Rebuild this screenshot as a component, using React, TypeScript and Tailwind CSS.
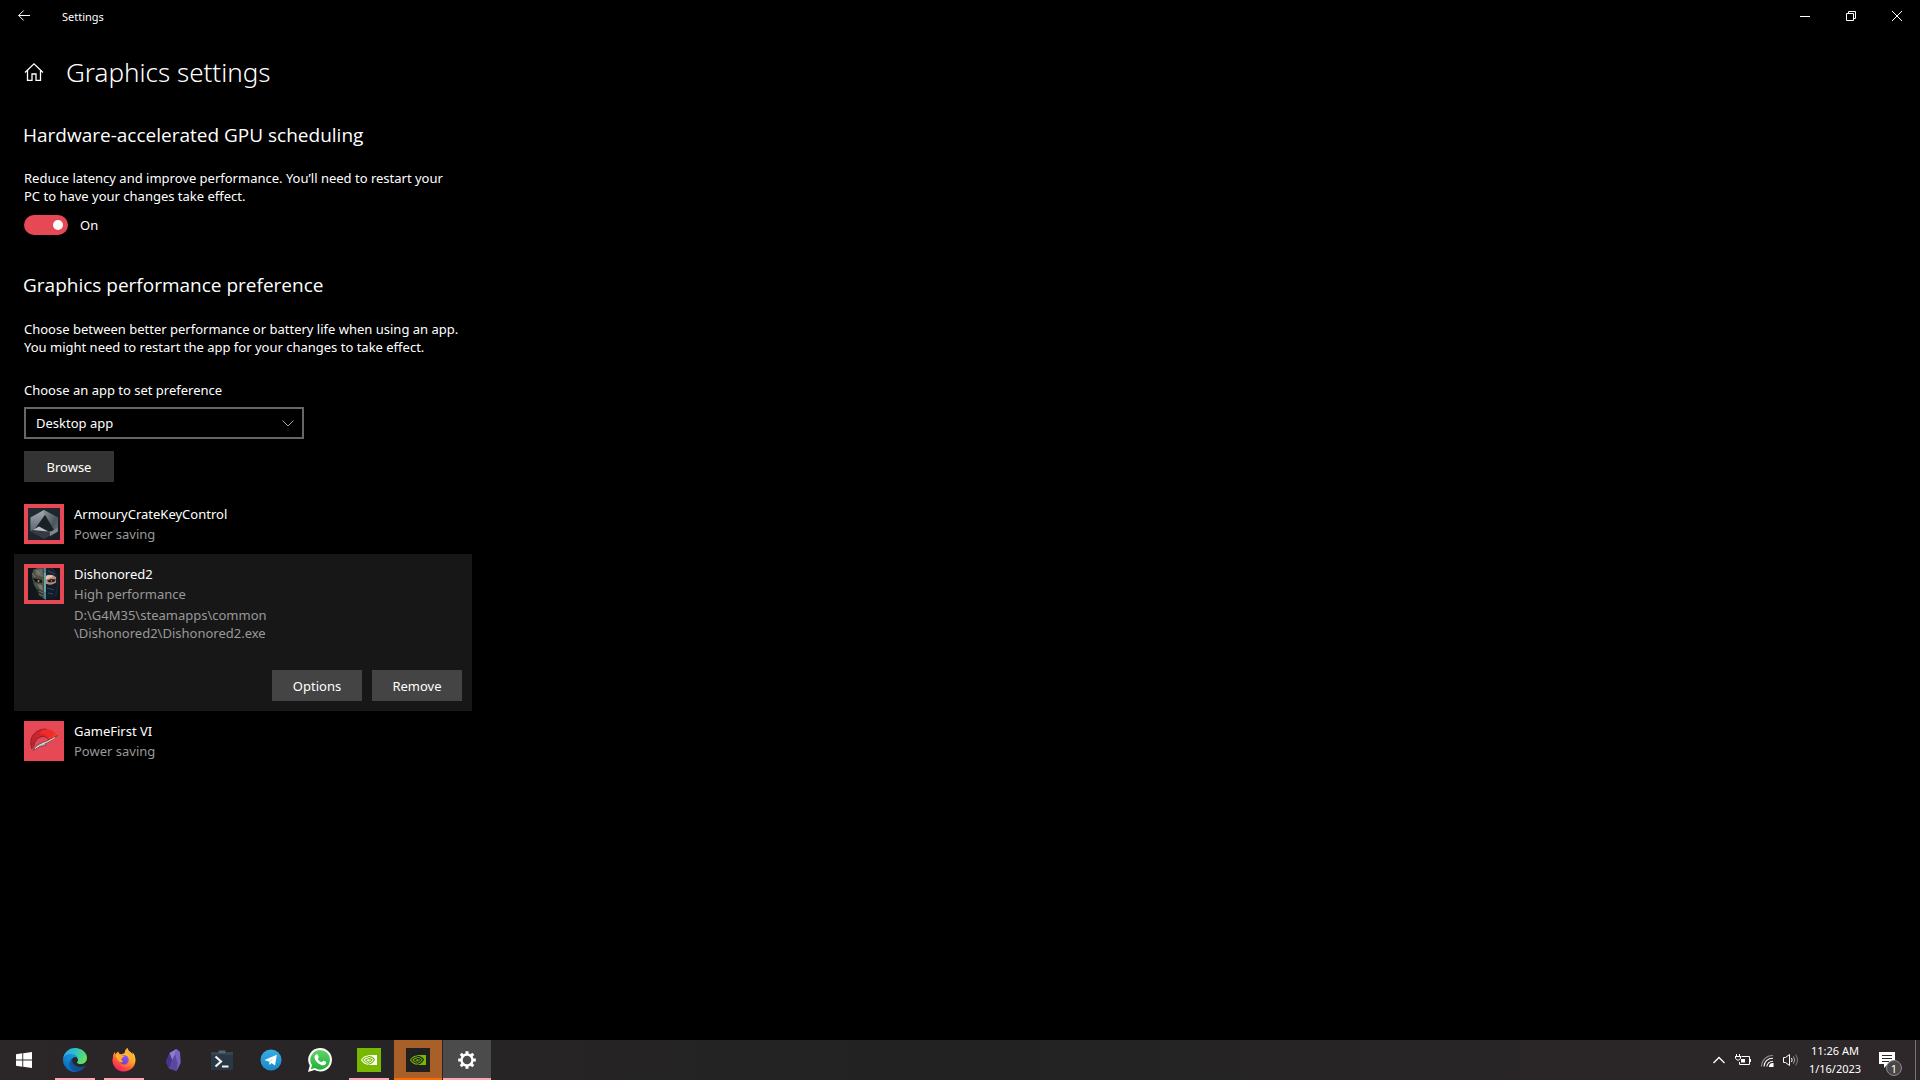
import React, { useState } from "react";

type AppEntry = { name: string; pref: string; path?: string[]; icon: React.ReactNode };

/* ---------- app list icons ---------- */
function ArmouryIcon() {
  return (
    <svg viewBox="0 0 32 32" className="size-8">
      <defs>
        <linearGradient id="arm-bg" x1="0" y1="0" x2="1" y2="1"><stop offset="0" stopColor="#242c36" /><stop offset="1" stopColor="#1b1c26" /></linearGradient>
        <linearGradient id="arm-l" x1="0" y1="0" x2="0" y2="1"><stop offset="0" stopColor="#a3abb3" /><stop offset="1" stopColor="#5d666f" /></linearGradient>
        <linearGradient id="arm-r" x1="0" y1="0" x2="1" y2="1"><stop offset="0" stopColor="#8b939b" /><stop offset=".6" stopColor="#4b535c" /><stop offset="1" stopColor="#747d86" /></linearGradient>
      </defs>
      <rect width="32" height="32" fill="url(#arm-bg)" />
      <path d="M16 2 30 9.500V23.500L16 31 2.500 23.500V9.500Z" fill="#343b44" />
      <path d="M16 2 30 9.500V23.500L22 28 21 23 26 22 17 7Z" fill="url(#arm-r)" />
      <path d="M16 2 17 7 7 21 2.500 23V9.500Z" fill="url(#arm-l)" />
      <path d="M17 7 27 24 21 23 11 18.500 7 21Z" fill="#1b1f26" />
      <path d="M5 22 11 18.500 20 23.500Z" fill="#b9c0c6" />
      <path d="M29.500 20V23.500L22 28 22 24Z" fill="#7e8790" />
    </svg>
  );
}

function DishonoredIcon() {
  return (
    <svg viewBox="0 0 32 32" className="size-8">
      <rect width="32" height="32" fill="#11171a" />
      <path d="M5 2 9 0H16V31L12 28 9 22 6 17 4 9Z" fill="#4c5048" />
      <path d="M7 2 14 1 15 9 8 7Z" fill="#6c6c60" />
      <path d="M5 10 14 12V15L7 14Z" fill="#131615" />
      <circle cx="10.500" cy="13" r="1" fill="#b89c4b" />
      <path d="M9 16 14 17 15 22 12 21Z" fill="#777a6c" />
      <path d="M8 20 15 24V30L11 28Z" fill="#292f2b" />
      <path d="M11 23 15 25M11 26 15 28M4 5 7 9M9 3 12 6" stroke="#8b8d7e" fill="none" strokeWidth=".8" />
      <path d="M18 0H25Q30 5 31 17L29 28 18 31Z" fill="#17232f" />
      <path d="M18 8Q22 5 28 9L28 15Q23 18 18 16Z" fill="#b58b77" />
      <path d="M18 8Q21 6 26 8L22 10 18 11.500Z" fill="#e2c3b0" />
      <path d="M19 12.500 23 11 28 11.500 26 14 21 14.500Z" fill="#241815" />
      <circle cx="23.500" cy="12.800" r=".8" fill="#bc8459" />
      <path d="M18 16 23 17.500 29 14 27 27 18 31Z" fill="#101c2a" />
      <path d="M20 3 27 6M19 20 26 22M20 25 25 26" stroke="#33465a" fill="none" />
      <path d="M16 0H18V31L17 32 16 30Z" fill="#4b8692" />
      <path d="M17 5V24" stroke="#a8d9dd" strokeWidth=".7" />
    </svg>
  );
}

function GameFirstIcon() {
  return (
    <svg viewBox="0 0 32 32" className="size-8">
      <defs>
        <linearGradient id="gf-r" x1="0" y1="0" x2="1" y2="0"><stop offset="0" stopColor="#b32b35" /><stop offset=".5" stopColor="#e3202a" /><stop offset="1" stopColor="#ff4220" /></linearGradient>
      </defs>
      <path d="M4 24Q1 16 5 10 10 3 18 4 25 4 30 10L22 15Q17 9 11 13 6 16 6 22Z" fill="url(#gf-r)" />
      <path d="M4 24Q1 16 5 10 10 4 18 4M6 21Q6 15 12 12 17 10 21 15" fill="none" stroke="#83202c" strokeWidth=".9" />
      <path d="M14 5Q22 4 27 9L21 12Q18 8 12 9Z" fill="#f02c28" />
      <path d="M29.500 10.500 21 17 17 18.500 18 20.500 12 21.500 5 25.500 9 20 13 18.500 15 17 19 16Z" fill="#a7a5a7" stroke="#51373c" strokeWidth=".6" />
      <path d="M27 12.500 19 17 12 20 7 23.500" fill="none" stroke="#e8e5e5" strokeWidth=".9" />
    </svg>
  );
}

/* ---------- taskbar icons ---------- */
const WindowsIcon = () => (
  <svg viewBox="0 0 16 16" className="size-4 fill-white"><path d="M0 2.200 6.300 1.300V7.500H0ZM7.200 1.200 16 0V7.500H7.200ZM0 8.500H6.300V14.700L0 13.800ZM7.200 8.500H16V16L7.200 14.800Z" /></svg>
);

const EdgeIcon = () => (
  <svg viewBox="0 0 256 256" className="size-6">
    <defs>
      <linearGradient id="ed-a" x1="0" y1="0" x2="1" y2="0"><stop offset="0" stopColor="#0c59a4" /><stop offset="1" stopColor="#114a8b" /></linearGradient>
      <linearGradient id="ed-b" x1=".8" y1="0" x2=".3" y2="1"><stop offset="0" stopColor="#1b9de2" /><stop offset=".5" stopColor="#1383d3" /><stop offset="1" stopColor="#0b62b5" /></linearGradient>
      <linearGradient id="ed-c" x1="0" y1=".3" x2="1" y2=".6"><stop offset="0" stopColor="#35a8ea" /><stop offset=".45" stopColor="#2cc0c9" /><stop offset="1" stopColor="#66e852" /></linearGradient>
    </defs>
    <path fill="url(#ed-a)" d="M231 190.500c-3.400 1.800-6.900 3.400-10.500 4.700a101.900 101.900 0 0 1-35.900 6.400c-47.300 0-88.500-32.500-88.500-74.300a31.500 31.500 0 0 1 16.400-27.300c-42.800 1.800-53.800 46.400-53.800 72.500 0 74 68.100 81.400 82.800 81.400 7.900 0 19.800-2.300 27-4.600l1.300-.4a128.300 128.300 0 0 0 66.600-52.800 4 4 0 0 0-5.400-5.600z" />
    <path fill="url(#ed-b)" d="M105.700 241.400a79.200 79.200 0 0 1-22.700-21.300 80.700 80.700 0 0 1 29.500-120c3.200-1.500 8.500-4.100 15.600-4a32.400 32.400 0 0 1 25.700 13 31.900 31.900 0 0 1 6.300 18.700c0-.2 24.500-79.600-80-79.600-43.900 0-80 41.600-80 78.200a130.200 130.200 0 0 0 12.100 56 128 128 0 0 0 156.400 67 75.500 75.500 0 0 1-62.800-8z" />
    <path fill="url(#ed-c)" d="M152.300 148.900c-.9 1-3.400 2.500-3.400 5.600 0 2.600 1.700 5.200 4.800 7.300 14.300 10 41.400 8.600 41.500 8.600a59.600 59.600 0 0 0 30.300-8.300 61.400 61.400 0 0 0 30.400-52.900c.3-22.400-8-37.300-11.300-43.900C223.500 23.900 177.700 0 128 0A128 128 0 0 0 0 126.200c.5-36.500 36.800-66 80-66 3.500 0 23.500.3 42 10 16.300 8.600 24.900 19 30.800 29.200 6.200 10.700 7.300 24.100 7.300 29.500 0 5.300-2.700 13.300-7.800 19.900z" />
  </svg>
);

const FirefoxIcon = () => (
  <svg viewBox="0 0 24 24" className="size-6">
    <defs>
      <linearGradient id="ff-a" x1=".8" y1="0" x2=".2" y2="1"><stop offset="0" stopColor="#fff04a" /><stop offset=".35" stopColor="#ffb52b" /><stop offset=".65" stopColor="#ff5a36" /><stop offset="1" stopColor="#f5156c" /></linearGradient>
      <linearGradient id="ff-b" x1=".7" y1="0" x2=".3" y2="1"><stop offset="0" stopColor="#9059ff" /><stop offset="1" stopColor="#6a3fd0" /></linearGradient>
    </defs>
    <path fill="url(#ff-a)" d="M15.500 0c-1.800 1.200-2.800 3.200-2.900 5.200-1.400.1-2.700.5-3.700 1.300C7.400 6 6.500 4.800 6.400 3.500 5.100 4 4.200 5.200 3.700 6.300c-.4-.2-.7-1.200-.6-2.600C1.300 5.500.8 8 .9 10c-.4.900-.6 2.100-.4 3.400C1.300 19.300 6 23.500 11.900 23.500c6.500 0 11.600-5 11.600-11.500 0-3.200-1.300-6.500-3.400-7.800.5 1 .8 2 .9 2.900C19.400 3.700 16.200 3.800 15.500 0Z" />
    <path fill="#ff9a2a" d="M15.500 0c-1.800 1.200-2.800 3.200-2.900 5.200 3 .2 5.500 2.500 5.900 5.300.6 4.500-3 7.200-6.700 7-3.300-.1-5.100-2-5.400-4.200 1.500 5.700 8.600 7.500 12.900 3.500 4-3.700 3.600-8 1.700-9.700C19.400 3.700 16.200 3.800 15.500 0Z" opacity=".55" />
    <circle cx="12.200" cy="11.800" r="4.600" fill="url(#ff-b)" />
    <path fill="#ffad2d" d="M3.700 6.300c1.700-.6 3.800-.3 5.200.2.700 1.100 2 1.500 3.300 1.600 0 1.200-2.200 1.500-2.700 2.700-.3 1 .2 2.200 1.800 2.800-1.400 1.100-3.400.6-5-1.200C5 11 3.500 9 3.700 6.300Z" />
  </svg>
);

const ObsidianIcon = () => (
  <svg viewBox="0 0 24 24" className="size-6">
    <path d="M15.500 1 19 4 19.500 15 15.500 23 8 20.500 5 14 8.500 5Z" fill="#5b48a2" />
    <path d="M15.500 1 8.500 5 11 12 14 6Z" fill="#8c7dd2" />
    <path d="M8.500 5 5 14 8 20.500 11 12Z" fill="#44358a" />
    <path d="M15.500 1 14 6 16.500 15 15.500 23 19.500 15 19 4Z" fill="#7565c0" />
    <path d="M11 12 8 20.500 15.500 23 16.500 15Z" fill="#5a479e" />
  </svg>
);

const PowerShellIcon = () => (
  <svg viewBox="0 0 24 24" className="size-6">
    <rect x="1" y="5" width="22" height="17" rx="1" fill="#283845" />
    <path d="M1 6V4H8.500V6.500H15.500V4H23V7H1Z" fill="#34454f" />
    <rect x="8.500" y="2.500" width="7" height="3" rx=".5" fill="#5b646b" />
    <path d="M5.500 8.500 11 13.500 5.500 18.500" fill="none" stroke="#f5f5f5" strokeWidth="2.200" />
    <path d="M12 18.500H18.500" stroke="#f5f5f5" strokeWidth="2" />
  </svg>
);

const TelegramIcon = () => (
  <svg viewBox="0 0 24 24" className="size-6">
    <defs><linearGradient id="tg" x1="0" y1="0" x2="0" y2="1"><stop offset="0" stopColor="#36aee6" /><stop offset="1" stopColor="#1b87c8" /></linearGradient></defs>
    <circle cx="12" cy="12" r="10.500" fill="url(#tg)" />
    <path d="M5.500 12 17.800 6.800 16 17.500 12.500 15 10.800 17 9.800 13.500Z" fill="#fff" />
    <path d="M9.800 13.500 15.500 9 11 14.200 10.800 17Z" fill="#b9dcef" />
  </svg>
);

const WhatsAppIcon = () => (
  <svg viewBox="0 0 24 24" className="size-6">
    <defs><linearGradient id="wa" x1="0" y1="0" x2="0" y2="1"><stop offset="0" stopColor="#5fd668" /><stop offset="1" stopColor="#20b038" /></linearGradient></defs>
    <path d="M12.200 0A11.800 11.800 0 0 1 24 11.800 11.800 11.800 0 0 1 6.500 22.100L0 24 1.800 17.600A11.800 11.800 0 0 1 12.200 0Z" fill="#fff" />
    <path d="M12.200 2A9.800 9.800 0 0 1 22 11.800 9.800 9.800 0 0 1 6.900 20L2.800 21.200 4 17.300A9.800 9.800 0 0 1 12.200 2Z" fill="url(#wa)" />
    <path d="M8.300 6.300h.9c.3 0 .5.200.6.500l.9 2.100c.1.300 0 .5-.1.700l-.9 1.100c.9 1.700 2.200 2.800 4 3.600l1.200-1.400c.2-.2.400-.3.700-.2l2.200 1.100c.3.100.4.300.4.600 0 1.800-1.500 2.900-3 2.900-1.600 0-4.200-1.200-5.900-2.900C7.700 12.800 6.500 10.700 6.500 9.200c0-1.300.8-2.500 1.800-2.900Z" fill="#fff" />
  </svg>
);

// the eye is drawn in `fg` on the left and cut out of the block in `bg` on the right
function NvidiaIcon({ bg, fg }: { bg: string; fg: string }) {
  return (
    <svg viewBox="0 0 24 24" className="size-6" fill="none">
      <rect width="24" height="24" fill={bg} />
      <rect x="11" y="7" width="9" height="10" fill={fg} />
      <path d="M11.500 8Q7 8 4.500 12 7.500 16.300 11.500 16.300M11.500 10Q8.500 10 7 12 8.500 14.500 11.500 14.500" stroke={fg} strokeWidth="1.100" />
      <path d="M11 8.200Q15.500 8.500 17.500 11.500 15 16 11 16.200M11 10.200Q13.800 10.300 15 11.800 13.500 14.200 11 14.400" stroke={bg} strokeWidth="1.100" />
      <ellipse cx="11.200" cy="12.200" rx="1.600" ry="1.200" fill={fg} stroke={bg} strokeWidth=".6" />
    </svg>
  );
}

const GearIcon = () => (
  <svg viewBox="0 0 20 20" className="size-5">
    <circle cx="10" cy="10" r="5.500" fill="none" stroke="#fff" strokeWidth="2.400" />
    {[0, 45, 90, 135, 180, 225, 270, 315].map(a => <path key={a} d="M8.500 4.500V1.200H11.500V4.500Z" fill="#fff" transform={`rotate(${a} 10 10)`} />)}
  </svg>
);

const pinned = [
  { label: "Microsoft Edge", icon: <EdgeIcon />, running: true },
  { label: "Firefox", icon: <FirefoxIcon />, running: true },
  { label: "Obsidian", icon: <ObsidianIcon /> },
  { label: "PowerShell", icon: <PowerShellIcon /> },
  { label: "Telegram", icon: <TelegramIcon /> },
  { label: "WhatsApp", icon: <WhatsAppIcon /> },
  { label: "GeForce Experience", icon: <NvidiaIcon bg="#76b900" fg="#ffffff" />, running: true },
];

const apps: AppEntry[] = [
  { name: "ArmouryCrateKeyControl", pref: "Power saving", icon: <ArmouryIcon /> },
  { name: "Dishonored2", pref: "High performance", path: ["D:\\G4M35\\steamapps\\common", "\\Dishonored2\\Dishonored2.exe"], icon: <DishonoredIcon /> },
  { name: "GameFirst VI", pref: "Power saving", icon: <GameFirstIcon /> },
];

function TitleBar() {
  const cap = "flex h-8 w-[46px] items-center justify-center hover:bg-[#333]";
  return (
    <header className="flex h-8 items-center">
      <button aria-label="Back" className="flex h-8 w-12 items-center justify-center">
        <svg viewBox="0 0 12 12" className="size-3" fill="none" stroke="#fff"><path d="M12 5.500H.7M5.700.5.700 5.500 5.700 10.500" /></svg>
      </button>
      <span className="ml-[14px] flex-1 pt-[2px] text-[11px]">Settings</span>
      <button aria-label="Minimize" className={cap}><svg viewBox="0 0 10 10" className="size-[10px]" stroke="#fff"><path d="M0 5.500H10" /></svg></button>
      <button aria-label="Restore" className={cap}><svg viewBox="0 0 10 10" className="size-[10px]" fill="none" stroke="#fff"><path d="M.5 2.500H7.500V9.500H.5ZM2.500 2.500V.5H9.500V7.500H7.500" /></svg></button>
      <button aria-label="Close" className={cap}><svg viewBox="0 0 10 10" className="size-[10px]" stroke="#fff"><path d="M0 0 10 10M10 0 0 10" /></svg></button>
    </header>
  );
}

function AppRow({ app, open, onSelect }: { app: AppEntry; open: boolean; onSelect: () => void }) {
  const btn = "h-[31px] w-[90px] bg-[#444] pt-[2px] hover:bg-[#555]";
  return (
    <li className={open ? "bg-[#171717] p-[10px]" : "p-[10px]"}>
      <button onClick={onSelect} className="flex w-full gap-[10px] text-left">
        <span className="flex size-10 shrink-0 items-center justify-center bg-[#e74856]">{app.icon}</span>
        <span className="block leading-5">
          <span className="block">{app.name}</span>
          <span className="block text-[#999]">{app.pref}</span>
          {open && app.path && <span className="mt-[2px] block leading-[18px] text-[#999]">{app.path.map(p => <span key={p} className="block">{p}</span>)}</span>}
        </span>
      </button>
      {open && (
        <div className="mt-7 flex justify-end gap-[10px]">
          <button className={btn}>Options</button>
          <button className={btn}>Remove</button>
        </div>
      )}
    </li>
  );
}

function Taskbar() {
  const tray = "flex h-10 w-6 items-center justify-center";
  return (
    <footer className="flex h-10 items-center bg-linear-to-r from-[#2b2628] via-[#222222] to-[#2e282a]">
      <button aria-label="Start" className="mr-[3px] flex h-10 w-12 items-center justify-center"><WindowsIcon /></button>
      <div className="flex flex-1 gap-px">
        {pinned.map(p => (
          <button key={p.label} aria-label={p.label} className="flex h-10 w-12 flex-col items-center">
            <span className="flex flex-1 items-center pt-[2px]">{p.icon}</span>
            <span className={p.running ? "h-[2px] w-10 bg-[#ffa7b0]" : "h-[2px] w-10"} />
          </button>
        ))}
        <button aria-label="NVIDIA Control Panel" className="flex h-10 w-12 flex-col items-center bg-[#a85f28]">
          <span className="flex flex-1 items-center pt-[2px]"><NvidiaIcon bg="#202020" fg="#76b900" /></span><span className="h-[2px] w-12 bg-[#ff6a00]" />
        </button>
        <button aria-label="Settings" className="flex h-10 w-12 flex-col items-center bg-[#4b4b4c]">
          <span className="flex flex-1 items-center pt-[2px]"><GearIcon /></span><span className="h-[2px] w-12 bg-[#ffa7b0]" />
        </button>
      </div>
      <button aria-label="Show hidden icons" className={tray}>
        <svg viewBox="0 0 12 8" className="h-2 w-3" fill="none" stroke="#fff" strokeWidth="1.300"><path d="M.5 7 6 1.500 11.500 7" /></svg>
      </button>
      <button aria-label="Battery" className={tray}>
        <svg viewBox="0 0 16 16" className="size-4" fill="none" stroke="#fff"><path d="M6.500 4.500H14.500V12.500H4.500V10M15.500 7V10" /><path d="M1.500 2V4.500M4.500 2V4.500M0 4.500H6M.5 5V6.500L3 8.500 5.500 6.500V5" /><path d="M6 7H10V10.500H6Z" fill="#fff" stroke="none" /></svg>
      </button>
      <button aria-label="Network" className={tray}>
        <svg viewBox="0 0 14 14" className="size-[14px]" fill="none" stroke="#fff" strokeWidth="1.100"><path d="M1.500 13.500A11 11 0 0 1 13 2.500" stroke="#8f8c8d" /><path d="M4 13.500A8.500 8.500 0 0 1 13 5.200M6.800 13.500A6 6 0 0 1 13 8.200" /><path d="M9.500 13.500A3.500 3.500 0 0 1 13 10.500V13.500Z" fill="#fff" /></svg>
      </button>
      <button aria-label="Volume" className={tray}>
        <svg viewBox="0 0 18 14" className="h-[14px] w-[18px]" fill="none" stroke="#fff"><path d="M1.500 4.500H3.500L7.500 1.500V12.500L3.500 9.500H1.500Z" /><path d="M9.500 5Q10.800 7 9.500 9" /><path d="M11.500 3.500Q14 7 11.500 10.500" stroke="#aaa" /><path d="M13.500 1.500Q17.500 7 13.500 12.500" stroke="#807d7e" /></svg>
      </button>
      <button className="w-16 text-center text-[11px] leading-[18px]">
        <span className="block">11:26 AM</span><span className="block">1/16/2023</span>
      </button>
      <button aria-label="Notifications" className="flex h-10 w-12 items-center justify-center">
        <span className="relative block h-6 w-6">
          <svg viewBox="0 0 24 24" className="size-6"><path d="M0 4H16V16H9L5 20V16H0Z" fill="#fff" /><path d="M3 7.500H13M3 10.500H13M3 13.500H10" stroke="#2e282a" /></svg>
          <span className="absolute right-px -bottom-1 flex size-4 items-center justify-center rounded-full border border-[#8c898a] bg-[#4a4647] text-[11px] leading-none">1</span>
        </span>
      </button>
      <button aria-label="Show desktop" className="h-10 w-[5px] border-l border-[#777475]" />
    </footer>
  );
}

export default function App() {
  const [gpu, setGpu] = useState(true);
  const [selected, setSelected] = useState("Dishonored2");
  const heading = "-ml-px font-['Open_Sans',sans-serif] text-[19px] leading-7";
  return (
    <div className="flex min-h-screen flex-col bg-black font-['Noto_Sans','Open_Sans',sans-serif] text-[13px] text-white">
      <TitleBar />
      <main className="flex-1 pl-6">
        <div className="flex h-20 items-center gap-[22px]">
          <a href="#home" aria-label="Home" className="block">
            <svg viewBox="0 0 20 20" className="size-5" fill="none" stroke="#fff" strokeWidth="1.300"><path d="M1 10.500 10 1.800 19 10.500M3.500 8.500V18.300H8V12H12V18.300H16.500V8.500" /></svg>
          </a>
          <h1 className="text-[26px] leading-10 font-light">Graphics settings</h1>
        </div>
        <section className="mt-[9px] w-[448px]">
          <h2 className={heading}>Hardware-accelerated GPU scheduling</h2>
          <p className="mt-5 leading-[18px]">Reduce latency and improve performance. You’ll need to restart your<br />PC to have your changes take effect.</p>
          <label className="mt-[10px] flex h-5 items-center gap-3">
            <input type="checkbox" role="switch" checked={gpu} onChange={e => setGpu(e.target.checked)}
              className="flex h-5 w-11 appearance-none items-center rounded-full border-2 border-[#999] px-[3px] before:size-[10px] before:rounded-full before:bg-white checked:justify-end checked:border-[#e74856] checked:bg-[#e74856]" />
            <span className="pt-[2px]">{gpu ? "On" : "Off"}</span>
          </label>
        </section>
        <section className="mt-9 w-[448px]">
          <h2 className={heading}>Graphics performance preference</h2>
          <p className="mt-[21px] leading-[18px]">Choose between better performance or battery life when using an app.<br />You might need to restart the app for your changes to take effect.</p>
          <label htmlFor="app-kind" className="mt-[25px] block leading-[18px]">Choose an app to set preference</label>
          <div className="relative mt-2 w-[280px]">
            <select id="app-kind" className="h-8 w-full appearance-none border-2 border-[#666] bg-black px-[10px] pt-[2px]"><option>Desktop app</option><option>Microsoft Store app</option></select>
            <svg viewBox="0 0 12 7" className="pointer-events-none absolute top-[13px] right-[10px] h-[7px] w-3" fill="none" stroke="#aaa"><path d="M.5.500 6 6 11.500.500" /></svg>
          </div>
          <button className="mt-3 block h-[31px] w-[90px] bg-[#333] pt-[2px] hover:bg-[#444]">Browse</button>
        </section>
        <ul className="mt-3 -ml-[10px] w-[458px]">
          {apps.map(a => <AppRow key={a.name} app={a} open={a.name === selected} onSelect={() => setSelected(a.name)} />)}
        </ul>
      </main>
      <Taskbar />
    </div>
  );
}
